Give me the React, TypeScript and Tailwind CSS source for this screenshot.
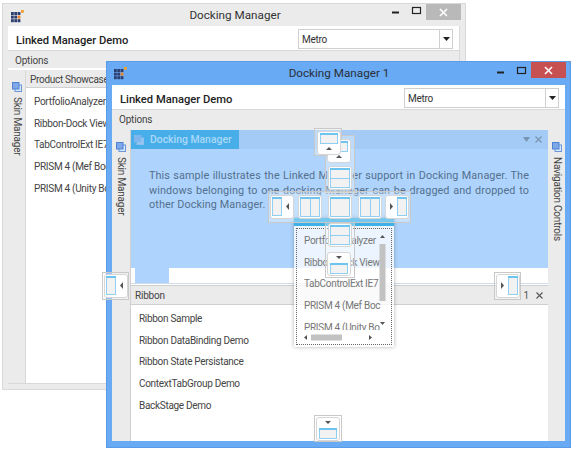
import React from "react";

const FONT = "[font-family:Roboto,'Open_Sans',sans-serif]";

function Logo() {
  const cells: [number, number][] = [];
  for (let r = 0; r < 3; r++) for (let c = 0; c < 3; c++) cells.push([c, r]);
  return (
    <svg width="13" height="13" viewBox="0 0 13 13" className="shrink-0">
      {cells.map(([c, r]) => {
        const orange = c === 2 && r === 1;
        return <rect key={`${c}${r}`} x={c * 3.3} y={2 + r * 3.6} width="2.8" height="3" fill={orange ? "#e8842c" : "#2c3e6e"} />;
      })}
      <rect x="10" y="0" width="2.8" height="2.8" fill="#f0a030" />
    </svg>
  );
}

function WinControls({ active }: { active: boolean }) {
  const ink = "#222";
  return (
    <div className="flex items-start shrink-0 mr-[4px]">
      <svg width="60" height="16" viewBox="0 0 60 16" className={active ? "mt-[2px]" : ""}>
        <rect x="26" y="7.5" width="7" height="2" fill={ink} />
        <rect x="46.5" y="3.5" width="8" height="6" fill="none" stroke={ink} strokeWidth="1.2" />
      </svg>
      <div className={`flex items-center justify-center w-[35px] h-[16px] ${active ? "bg-[#c75050]" : "bg-[#b9b9b9]"}`}>
        <svg width="9" height="9" viewBox="0 0 9 9">
          <path d="M1 1 L8 8 M8 1 L1 8" stroke="#fff" strokeWidth="1.6" />
        </svg>
      </div>
    </div>
  );
}

function Combo() {
  return (
    <div className="w-[155px] h-[20px] bg-white border border-[#cfcfcf] flex items-center text-[10px] tracking-[-0.3px] text-[#333]">
      <span className="flex-1 pl-[3px]">Metro</span>
      <div className="w-[13px] h-full border-l border-[#cfcfcf] flex items-center justify-center">
        <svg width="7" height="4" viewBox="0 0 7 4"><path d="M0 0H7L3.5 4Z" fill="#222" /></svg>
      </div>
    </div>
  );
}

function PanelIcon({ tint }: { tint?: boolean }) {
  return (
    <svg width="10" height="10" viewBox="0 0 10 10" className="shrink-0">
      <rect x="3" y="3" width="6.5" height="6.5" fill={tint ? "#9cc8f0" : "#d7e6fa"} stroke={tint ? "#8cc0ee" : "#6d97d8"} />
      <rect x="0.5" y="0.5" width="6.5" height="6.5" fill={tint ? "#7fb6ee" : "#7fa8e8"} stroke={tint ? "#7fb6ee" : "#4f82d4"} />
    </svg>
  );
}

function SideTab({ label }: { label: string }) {
  return (
    <div className="flex flex-col items-center pt-[12px] gap-[5px] w-[17px] shrink-0 bg-[#ebebeb]">
      <PanelIcon />
      <span className="[writing-mode:vertical-rl] text-[10px] tracking-[-0.2px] leading-[14px] text-[#444] whitespace-nowrap">{label}</span>
    </div>
  );
}

function ListItems({ items }: { items: string[] }) {
  return (
    <ul className="pt-[3px]">
      {items.map((t) => (
        <li key={t} className="h-[21.7px] leading-[21.7px] pl-[8px] text-[10px] tracking-[-0.3px] text-[#444] whitespace-nowrap">{t}</li>
      ))}
    </ul>
  );
}

function TileIcon({ kind }: { kind: string }) {
  const blue = "#6cc4ef";
  const fill = "#f2f2f2";
  const edge = "#8fd0f2";
  const arrow = "#555";
  switch (kind) {
    case "center":
      return (
        <svg width="20" height="20" viewBox="0 0 20 20">
          <rect x="0.5" y="0.5" width="19" height="19" fill={fill} stroke={edge} />
          <rect x="0" y="0" width="20" height="2" fill={blue} />
        </svg>
      );
    case "innerTop":
    case "innerBottom":
      return (
        <svg width="20" height="20" viewBox="0 0 20 20">
          <rect x="0.5" y="0.5" width="19" height="19" fill={fill} stroke={edge} />
          <rect x="0" y="0" width="20" height="2" fill={blue} />
          <rect x="1" y="10" width="18" height="1" fill={edge} />
        </svg>
      );
    case "innerLeft":
    case "innerRight":
      return (
        <svg width="20" height="20" viewBox="0 0 20 20">
          <rect x="0.5" y="0.5" width="19" height="19" fill={fill} stroke={edge} />
          <rect x="0" y="0" width="20" height="2" fill={blue} />
          <rect x="10" y="1" width="1" height="18" fill={edge} />
        </svg>
      );
    case "outerTop":
      return (
        <svg width="20" height="20" viewBox="0 0 20 20">
          <rect x="1.5" y="0.5" width="17" height="10" fill={fill} stroke={edge} />
          <rect x="1" y="0" width="18" height="2" fill={blue} />
          <path d="M10 14 L13 17 H7 Z" fill={arrow} />
        </svg>
      );
    case "outerBottom":
      return (
        <svg width="20" height="20" viewBox="0 0 20 20">
          <path d="M7 2 H13 L10 5 Z" fill={arrow} />
          <rect x="1.5" y="9.5" width="17" height="10" fill={fill} stroke={edge} />
          <rect x="1" y="9" width="18" height="2" fill={blue} />
        </svg>
      );
    case "outerLeft":
      return (
        <svg width="20" height="20" viewBox="0 0 20 20">
          <rect x="0.5" y="0.5" width="9" height="18" fill={fill} stroke={edge} />
          <rect x="0" y="0" width="10" height="2" fill={blue} />
          <path d="M17 6 V13 L14 9.5 Z" fill={arrow} />
        </svg>
      );
    default:
      return (
        <svg width="20" height="20" viewBox="0 0 20 20">
          <path d="M3 6 V13 L6 9.5 Z" fill={arrow} />
          <rect x="10.5" y="0.5" width="9" height="18" fill={fill} stroke={edge} />
          <rect x="10" y="0" width="10" height="2" fill={blue} />
        </svg>
      );
  }
}

function Tile({ kind, className }: { kind: string; className: string }) {
  return (
    <div className={`absolute w-[24px] h-[24px] flex items-center justify-center bg-white/95 border border-[#d6d6d6] rounded-[3px] ${className}`}>
      <TileIcon kind={kind} />
    </div>
  );
}

function Frame({ className }: { className: string }) {
  return <div className={`absolute border border-[#c9c9c9] bg-white/30 ${className}`} />;
}

function Header() {
  return (
    <div className="h-[24px] flex items-center justify-between pl-[8px] pr-[6px] shrink-0">
      <span className="text-[11.2px] leading-[14px] font-medium text-[#222] pt-[6px]">Linked Manager Demo</span>
      <div className="pt-[2px]"><Combo /></div>
    </div>
  );
}

function Options() {
  return <div className="h-[18px] bg-[#ebebeb] border-t border-[#d9d9d9] text-[10px] tracking-[-0.2px] leading-[19px] pl-[7px] text-[#444] shrink-0">Options</div>;
}

const BACK_ITEMS = ["PortfolioAnalyzer", "Ribbon-Dock View", "TabControlExt IE7", "PRISM 4 (Mef Boc", "PRISM 4 (Unity Bo"];
const LINE = "block [text-align:justify] [text-align-last:justify]";

function BackWindow() {
  return (
    <div className="absolute left-[2px] top-[3px] w-[464px] h-[387px] bg-[#ebebeb] border border-[#d9d9d9] flex flex-col">
      <div className="h-[22px] flex items-start shrink-0">
        <div className="pl-[8px] pt-[6px]"><Logo /></div>
        <div className="flex-1 text-center pl-[80px] text-[11.7px] leading-[22px] text-[#333]">Docking Manager</div>
        <WinControls active={false} />
      </div>
      <div className="mx-[5px] mb-[5px] flex-1 flex flex-col bg-white border-b border-r border-[#d9d9d9]">
        <Header />
        <Options />
        <div className="flex-1 flex pt-[2px] bg-white">
          <SideTab label="Skin Manager" />
          <div className="flex-1 border-l border-[#d9d9d9]">
            <div className="h-[18px] bg-[#ebebeb] border-b border-[#d0d0d0] text-[10px] tracking-[-0.3px] leading-[19px] pl-[4px] text-[#444]">Product Showcase</div>
            <ListItems items={BACK_ITEMS} />
          </div>
        </div>
      </div>
    </div>
  );
}

function FrontWindow() {
  return (
    <div className="absolute left-[106px] top-[61px] w-[465px] h-[387px] bg-[#69aaf4] border border-[#5a9be8] flex flex-col">
      <div className="h-[23px] flex items-start shrink-0">
        <div className="pl-[7px] pt-[5px]"><Logo /></div>
        <div className="flex-1 text-center pl-[80px] text-[11.7px] leading-[23px] text-[#2a2f38]">Docking Manager 1</div>
        <WinControls active />
      </div>
      <div className="mx-[5px] mb-[6px] flex-1 flex flex-col bg-white min-h-0">
        <Header />
        <Options />
        <div className="flex-1 flex pt-[3px] bg-[#ebebeb] min-h-0">
          <SideTab label="Skin Manager" />
          <div className="flex-1 flex flex-col border-l border-[#d0d0d0] bg-white min-w-0 ml-[1px]">
            <div className="h-[155px] shrink-0 flex bg-white flex-col">
              <div className="h-[138px] bg-[#aed4fd] flex flex-col">
                <div className="h-[19px] bg-[#a3cbf6] flex items-center shrink-0">
                  <div className="w-[108px] h-full bg-[#48aeea] flex items-center gap-[6px] pl-[3px] text-[10.4px] leading-[20px] text-[#a9d9f7] font-medium whitespace-nowrap">
                    <PanelIcon tint />
                    <span className="pt-[1px]">Docking Manager</span>
                  </div>
                  <div className="flex-1 flex justify-end items-center gap-[5px] pr-[6px]">
                    <svg width="7" height="5" viewBox="0 0 7 5"><path d="M0 0H7L3.5 5Z" fill="#7793b0" /></svg>
                    <svg width="7" height="7" viewBox="0 0 7 7"><path d="M0.5 0.5 L6.5 6.5 M6.5 0.5 L0.5 6.5" stroke="#7793b0" strokeWidth="1.1" /></svg>
                  </div>
                </div>
                <p className="pl-[18px] pr-[19px] pt-[20px] text-[10.8px] leading-[14.7px] text-[#53708d] tracking-[0.1px]">
                  <span className={LINE}>This sample illustrates the Linked Manager support in Docking Manager. The</span>
                  <span className={LINE}>windows belonging to one docking Manager can be dragged and dropped to</span>
                  <span className="block">other Docking Manager.</span>
                </p>
              </div>
              <div className="h-[16px] pl-[4px] border-b border-[#cfdcec]"><div className="w-[34px] h-full bg-[#aed4fd]" /></div>
            </div>
            <div className="h-[20px] bg-[#ebebeb] border-y border-[#cfcfcf] flex items-center justify-between pl-[4px] pr-[5px] text-[10px] tracking-[-0.2px] text-[#444] shrink-0">
              <span className="pt-[1px]">Ribbon</span>
              <div className="flex items-center gap-[7px] text-[#555]">
                <span>1</span>
                <svg width="7" height="7" viewBox="0 0 7 7"><path d="M0.5 0.5 L6.5 6.5 M6.5 0.5 L0.5 6.5" stroke="#555" strokeWidth="1.1" /></svg>
              </div>
            </div>
            <ListItems items={["Ribbon Sample", "Ribbon DataBinding Demo", "Ribbon State Persistance", "ContextTabGroup Demo", "BackStage Demo"]} />
          </div>
          <div className="w-[17px] shrink-0 bg-[#ebebeb] flex flex-col items-center pt-[12px] gap-[5px]">
            <PanelIcon />
            <span className="[writing-mode:vertical-rl] text-[10px] tracking-[-0.2px] leading-[14px] text-[#444] whitespace-nowrap">Navigation Controls</span>
          </div>
        </div>
      </div>
    </div>
  );
}

function FloatingList() {
  return (
    <div className="absolute left-[294px] top-[218px] w-[100px] h-[129px] shadow-[0_0_4px_rgba(0,0,0,0.3)]">
      <div className="h-[8px] bg-[#3db0e8]" />
      <div className="h-[121px] bg-white/75 p-[2px]">
        <div className="h-full border border-dotted border-[#666] relative text-[#777]">
          <div className="h-[101px] overflow-hidden">
            <ul className="pt-[1px]">
              {BACK_ITEMS.map((t) => (
                <li key={t} className="h-[21.7px] leading-[21.7px] pl-[7px] pr-[14px] text-[10px] tracking-[-0.3px] whitespace-nowrap overflow-hidden">{t}</li>
              ))}
            </ul>
          </div>
          <svg width="7" height="92" viewBox="0 0 7 92" className="absolute right-[5px] top-[5px]">
            <path d="M3.5 1 L6 4 H1 Z" fill="#555" />
            <rect x="0.5" y="10" width="6" height="57" fill="#c2c2c2" />
            <path d="M1 88 H6 L3.5 91 Z" fill="#555" />
          </svg>
          <svg width="70" height="7" viewBox="0 0 70 7" className="absolute left-[6px] bottom-[3px]">
            <path d="M4 1 V6 L1 3.5 Z" fill="#555" />
            <rect x="8" y="0.5" width="31" height="6" fill="#c2c2c2" />
            <path d="M66 1 V6 L69 3.5 Z" fill="#555" />
          </svg>
        </div>
      </div>
    </div>
  );
}

export default function App() {
  return (
    <div className={`relative w-[572px] h-[450px] bg-white overflow-hidden ${FONT}`}>
      <BackWindow />
      <FrontWindow />
      <FloatingList />
      <Frame className="left-[325px] top-[135px] w-[30px] h-[58px]" />
      <Frame className="left-[268px] top-[191px] w-[143px] h-[32px]" />
      <Frame className="left-[325px] top-[222px] w-[30px] h-[56px]" />
      <Frame className="left-[314px] top-[128px] w-[28px] h-[28px]" />
      <Tile kind="outerTop" className="left-[327px] top-[139px]" />
      <Tile kind="outerTop" className="left-[317px] top-[131px]" />
      <Tile kind="innerTop" className="left-[328px] top-[166px]" />
      <Tile kind="outerLeft" className="left-[270px] top-[195px]" />
      <Tile kind="innerLeft" className="left-[298px] top-[195px]" />
      <Tile kind="center" className="left-[328px] top-[195px]" />
      <Tile kind="innerRight" className="left-[358px] top-[195px]" />
      <Tile kind="outerRight" className="left-[385px] top-[195px]" />
      <Tile kind="innerBottom" className="left-[328px] top-[223px]" />
      <Tile kind="outerBottom" className="left-[327px] top-[252px]" />
      <Frame className="left-[102px] top-[272px] w-[27px] h-[28px]" />
      <Tile kind="outerLeft" className="left-[104px] top-[274px]" />
      <Frame className="left-[494px] top-[272px] w-[27px] h-[28px]" />
      <Tile kind="outerRight" className="left-[496px] top-[274px]" />
      <Frame className="left-[314px] top-[415px] w-[28px] h-[27px]" />
      <Tile kind="outerBottom" className="left-[316px] top-[417px]" />
    </div>
  );
}
